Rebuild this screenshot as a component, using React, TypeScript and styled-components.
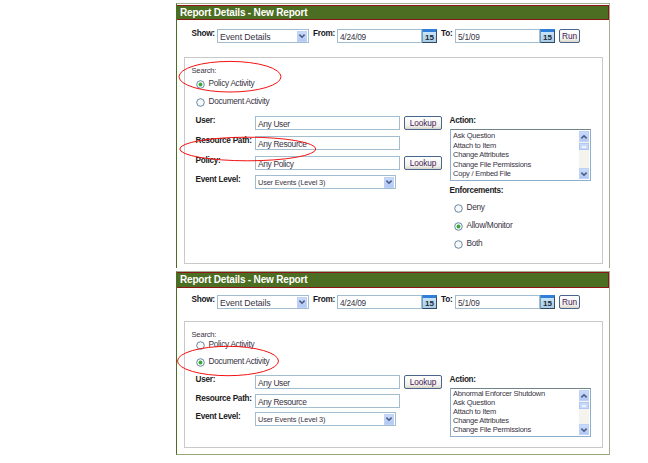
import React from 'react';
import styled, { createGlobalStyle } from 'styled-components';

const Global = createGlobalStyle`
  * { box-sizing: border-box; }
  body { margin: 0; background: #fff; font-family: "Liberation Sans", Arial, sans-serif; font-size: 8.3px; color: #383444; overflow: hidden; }
`;

const Page = styled.main`
  position: relative;
  width: 648px;
  height: 463px;
  padding: 3px 0 0 176px;
  display: flex;
  flex-direction: column;
  gap: 3px;
`;

const Panel = styled.section<{ $height: number; $open?: boolean }>`
  width: 434px;
  height: ${p => p.$height}px;
  border: 1px solid #a3ad94;
  border-left-color: #4c6e22;
  border-bottom: ${p => (p.$open ? '0' : '1px solid #98a67c')};
  display: flex;
  flex-direction: column;
`;

const TitleBar = styled.h1<{ $top: number }>`
  margin: ${p => p.$top}px 0 0;
  height: ${p => 16 - p.$top}px;
  flex: none;
  padding-left: 2px;
  background: #4c6e22;
  border: 1px solid #8c1515;
  border-left-color: #4c6e22;
  color: #fff;
  font-size: 10px;
  line-height: 13px;
  letter-spacing: -0.18px;
  white-space: nowrap;
`;

const Toolbar = styled.div<{ $gap: number }>`
  display: flex;
  flex: none;
  height: 15px;
  margin-top: ${p => p.$gap}px;
  padding-left: 14.5px;
  white-space: nowrap;
`;

const BarLabel = styled.label<{ $w: number }>`
  width: ${p => p.$w}px;
  flex: none;
  line-height: 9px;
  font-size: 8.2px;
  font-weight: bold;
  letter-spacing: -0.25px;
  color: #16161c;
`;

const Field = styled.div<{ $w: number; $size?: number; $track?: number }>`
  width: ${p => p.$w}px;
  height: 14px;
  flex: none;
  display: flex;
  align-items: center;
  justify-content: space-between;
  padding: 1px 1px 0 2px;
  border: 1px solid #a3bdd0;
  background: #fff;
  font-size: ${p => p.$size ?? 8.3}px;
  letter-spacing: ${p => p.$track ?? -0.25}px;
  line-height: 10px;
  white-space: nowrap;
`;

const Arrow = styled.span`
  width: 10px;
  height: 11px;
  flex: none;
  margin-top: -1px;
  display: flex;
  align-items: center;
  justify-content: center;
  background: linear-gradient(#c9dafb, #b3c9f3);
  border: 1px solid #bfd2f5;
`;

const Calendar = styled.div`
  width: 15px;
  height: 14px;
  flex: none;
  margin: 0 4px 0 0;
  border: 1px solid #6a9fc6;
  border-top: 3px solid #2f7fd8;
  border-right-color: #3b4c5f;
  border-bottom-color: #33475c;
  background: linear-gradient(#c9e4f7, #a9cce8);
  color: #1d2935;
  font-weight: bold;
  font-size: 8px;
  line-height: 11px;
  text-align: center;
`;

const Button = styled.button<{ $w: number }>`
  width: ${p => p.$w}px;
  height: 14px;
  flex: none;
  padding: 0;
  border: 1px solid #49658c;
  border-radius: 2px;
  background: linear-gradient(#fff, #f1f0e9 75%, #d9d6c9);
  color: #44205c;
  font: 8.3px/11px "Liberation Sans", Arial, sans-serif;
  letter-spacing: -0.1px;
`;

const Box = styled.div<{ $top: number; $height: number }>`
  width: 419px;
  height: ${p => p.$height}px;
  flex: none;
  margin: ${p => p.$top}px 0 0 7px;
  border: 1px solid #c9c9c9;
  padding-top: 8px;
  display: flex;
  flex-direction: column;
`;

const SearchTitle = styled.div<{ $h: number }>`
  height: ${p => p.$h}px;
  flex: none;
  padding-left: 6.5px;
  font-size: 7.6px;
  line-height: 10px;
  letter-spacing: -0.2px;
`;

const Choices = styled.div<{ $pitch: number; $height?: number; $indent: number; $top?: number }>`
  display: flex;
  flex: none;
  flex-direction: column;
  height: ${p => (p.$height ? p.$height + 'px' : 'auto')};
  margin-top: ${p => p.$top ?? 0}px;
  padding-left: ${p => p.$indent}px;
  & > label { height: ${p => p.$pitch}px; }
`;

const Choice = styled.label`
  display: flex;
  flex: none;
  gap: 4px;
  line-height: 9px;
  letter-spacing: -0.3px;
  white-space: nowrap;
  svg { margin-top: 1px; flex: none; }
`;

const Columns = styled.div`
  display: grid;
  grid-template-columns: 254px 1fr;
  padding-left: 10.5px;
`;

const Rows = styled.div`
  display: flex;
  flex-direction: column;
`;

const FormRow = styled.div<{ $pitch: number }>`
  display: flex;
  height: ${p => p.$pitch}px;
  white-space: nowrap;
`;

const FormLabel = styled.label<{ $w?: number }>`
  display: block;
  width: ${p => (p.$w ? p.$w + 'px' : 'auto')};
  flex: none;
  line-height: 9px;
  font-size: 8.2px;
  font-weight: bold;
  letter-spacing: -0.27px;
  color: #1c1c22;
`;

const Space = styled.span`
  width: 4px;
  flex: none;
`;

const List = styled.div<{ $h: number }>`
  width: 141px;
  height: ${p => p.$h}px;
  margin: 4px 0 5px;
  padding: 1px;
  border: 1px solid #8faecb;
  border-top-color: #71848c;
  display: flex;
  justify-content: space-between;
`;

const Items = styled.div<{ $pitch: number }>`
  padding-left: 1.5px;
  font-size: 7.5px;
  line-height: ${p => p.$pitch}px;
  letter-spacing: -0.23px;
  white-space: nowrap;
`;

const Scrollbar = styled.div`
  width: 10px;
  height: 100%;
  display: flex;
  flex-direction: column;
  background: #f4f3ee;
  & > :first-child { margin-top: 0; }
  & > :last-child { margin-top: auto; }
`;

const Thumb = styled.span`
  height: 7px;
  margin-top: 1px;
  background: #c6d8fc;
  border: 1px solid #aec6f2;
  display: flex;
  align-items: center;
  justify-content: center;
  &::after { content: ''; width: 4px; height: 2px; background: #eef4fe; }
`;

const Marks = styled.svg`
  position: absolute;
  left: 0;
  top: 0;
  pointer-events: none;
`;

function Chevron({ up }: { up?: boolean }) {
  return (
    <Arrow>
      <svg width="8" height="6" viewBox="0 0 8 6">
        <path d={up ? 'M1.4 4.4 L4 1.8 L6.6 4.4' : 'M1.4 1.6 L4 4.2 L6.6 1.6'} fill="none" stroke="#4a5c84" strokeWidth="1.6" />
      </svg>
    </Arrow>
  );
}

function Radio({ on, text }: { on?: boolean; text: string }) {
  return (
    <Choice>
      <svg width="9" height="9" viewBox="0 0 9 9">
        <circle cx="4.5" cy="4.5" r="3.8" fill="#f7f8f7" stroke="#557d9c" strokeWidth="0.9" />
        {on && <circle cx="4.5" cy="4.5" r="1.9" fill="#35aa35" />}
      </svg>
      {text}
    </Choice>
  );
}

function Controls({ gap }: { gap: number }) {
  return (
    <Toolbar $gap={gap}>
      <BarLabel $w={25.5}>Show:</BarLabel>
      <Field $w={92} $size={8.8} $track={-0.1}>Event Details<Chevron /></Field>
      <Space />
      <BarLabel $w={24}>From:</BarLabel>
      <Field $w={85}>4/24/09</Field>
      <Calendar>15</Calendar>
      <BarLabel $w={14}>To:</BarLabel>
      <Field $w={85}>5/1/09</Field>
      <Calendar>15</Calendar>
      <Button $w={21}>Run</Button>
    </Toolbar>
  );
}

function ActionList({ h, pitch, items }: { h: number; pitch: number; items: string[] }) {
  return (
    <List $h={h}>
      <Items $pitch={pitch}>{items.map(i => <div key={i}>{i}</div>)}</Items>
      <Scrollbar><Chevron up /><Thumb /><Chevron /></Scrollbar>
    </List>
  );
}

function Row({ label, value, pitch, lookup, select }: { label: string; value: string; pitch: number; lookup?: boolean; select?: boolean }) {
  return (
    <FormRow $pitch={pitch}>
      <FormLabel $w={59.5}>{label}</FormLabel>
      <Field $w={select ? 141 : 145} $size={select ? 7.3 : 8.4} $track={select ? -0.14 : -0.34}>{value}{select && <Chevron />}</Field>
      {lookup && <><Space /><Button $w={38}>Lookup</Button></>}
    </FormRow>
  );
}

export default function App() {
  return (
    <>
      <Global />
      <Page>
        <Panel $height={265} $open>
          <TitleBar $top={1}>Report Details - New Report</TitleBar>
          <Controls gap={9} />
          <Box $top={13} $height={207}>
            <SearchTitle $h={13}>Search:</SearchTitle>
            <Choices $pitch={18} $height={37} $indent={10.5}>
              <Radio on text="Policy Activity" />
              <Radio text="Document Activity" />
            </Choices>
            <Columns>
              <Rows>
                <Row label="User:" value="Any User" pitch={20} lookup />
                <Row label="Resource Path:" value="Any Resource" pitch={20} />
                <Row label="Policy:" value="Any Policy" pitch={19} lookup />
                <Row label="Event Level:" value="User Events (Level 3)" pitch={14} select />
              </Rows>
              <Rows>
                <FormLabel>Action:</FormLabel>
                <ActionList h={52} pitch={9.6} items={['Ask Question', 'Attach to Item', 'Change Attributes', 'Change File Permissions', 'Copy / Embed File']} />
                <FormLabel>Enforcements:</FormLabel>
                <Choices $pitch={17.8} $indent={4} $top={8}>
                  <Radio text="Deny" />
                  <Radio on text="Allow/Monitor" />
                  <Radio text="Both" />
                </Choices>
              </Rows>
            </Columns>
          </Box>
        </Panel>
        <Panel $height={184}>
          <TitleBar $top={0}>Report Details - New Report</TitleBar>
          <Controls gap={7} />
          <Box $top={11} $height={127}>
            <SearchTitle $h={10}>Search:</SearchTitle>
            <Choices $pitch={16.5} $height={35} $indent={10.5}>
              <Radio text="Policy Activity" />
              <Radio on text="Document Activity" />
            </Choices>
            <Columns>
              <Rows>
                <Row label="User:" value="Any User" pitch={19} lookup />
                <Row label="Resource Path:" value="Any Resource" pitch={18} />
                <Row label="Event Level:" value="User Events (Level 3)" pitch={14} select />
              </Rows>
              <Rows>
                <FormLabel>Action:</FormLabel>
                <ActionList h={49} pitch={8.9} items={['Abnormal Enforcer Shutdown', 'Ask Question', 'Attach to Item', 'Change Attributes', 'Change File Permissions']} />
              </Rows>
            </Columns>
          </Box>
        </Panel>
        <Marks width="648" height="463" viewBox="0 0 648 463">
          <g fill="none" stroke="#f31212" strokeWidth="1">
            <ellipse cx="230" cy="76.7" rx="51" ry="15.3" />
            <ellipse cx="247.8" cy="149" rx="68" ry="11.8" />
            <ellipse cx="228" cy="361" rx="50.5" ry="14.7" />
          </g>
        </Marks>
      </Page>
    </>
  );
}
